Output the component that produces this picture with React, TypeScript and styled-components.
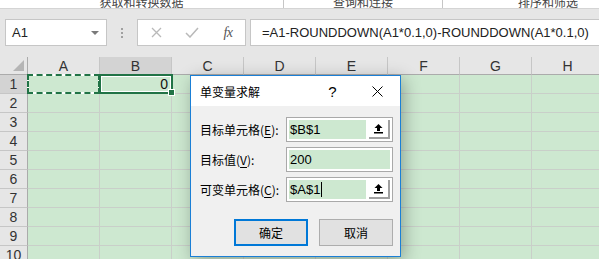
import React from "react";
import styled, { createGlobalStyle } from "styled-components";

const UI = `"Liberation Sans", Arial, "Noto Sans CJK SC", sans-serif`;
const CJK = `"Noto Sans CJK SC", "Liberation Sans", sans-serif`;

const GlobalStyle = createGlobalStyle`
  html, body {
    margin: 0;
    padding: 0;
  }
  body {
    width: 599px;
    height: 259px;
    overflow: hidden;
    font-family: ${UI};
  }
`;

const Screen = styled.div`
  position: relative;
  width: 599px;
  height: 259px;
  overflow: hidden;
  background: #e6e6e6;
  display: flex;
  flex-direction: column;
`;

const Ribbon = styled.div`
  height: 8px;
  flex-shrink: 0;
  display: flex;
  overflow: hidden;
  background: #fff;
  border-bottom: 1px solid #d4d4d4;
`;

const RibbonGroup = styled.div<{ $w: number; $last?: boolean }>`
  width: ${(p) => p.$w}px;
  flex-shrink: 0;
  display: flex;
  justify-content: center;
  align-items: flex-end;
  border-right: ${(p) => (p.$last ? "none" : "1px solid #c6c6c6")};
  font: 12px/12px ${CJK};
  color: #444;
  white-space: nowrap;
`;

const FormulaBar = styled.div`
  height: 48px;
  flex-shrink: 0;
  box-sizing: border-box;
  padding: 10px 0 11px 5px;
  display: flex;
  align-items: stretch;
`;

const NameBox = styled.div`
  width: 102px;
  flex-shrink: 0;
  box-sizing: border-box;
  background: #fff;
  border: 1px solid #c6c6c6;
  display: flex;
  align-items: center;
  justify-content: space-between;
  padding: 0 7px 0 6px;
  font: 13px ${UI};
  color: #222;
`;

const DropArrow = styled.span`
  width: 0;
  height: 0;
  border-left: 4px solid transparent;
  border-right: 4px solid transparent;
  border-top: 4px solid #7a7a7a;
`;

const Grip = styled.div`
  width: 30px;
  flex-shrink: 0;
  display: flex;
  flex-direction: column;
  align-items: center;
  justify-content: center;
  gap: 2px;
`;

const GripDot = styled.span`
  width: 2px;
  height: 2px;
  background: #a0a0a0;
`;

const FuncBox = styled.div`
  width: 109px;
  flex-shrink: 0;
  box-sizing: border-box;
  background: #fff;
  border: 1px solid #c6c6c6;
  display: flex;
`;

const FuncButton = styled.div`
  width: 36px;
  flex-shrink: 0;
  display: flex;
  align-items: center;
  justify-content: center;
`;

const Fx = styled.span`
  font: italic 14px "Liberation Serif", serif;
  color: #555;
  letter-spacing: -0.5px;
`;

const FormulaInput = styled.div`
  margin-left: 4px;
  width: 380px;
  flex-shrink: 0;
  box-sizing: border-box;
  background: #fff;
  border: 1px solid #c6c6c6;
  display: flex;
  align-items: center;
  padding-left: 11px;
  font: 13px ${UI};
  color: #222;
  white-space: nowrap;
`;

const Sheet = styled.div`
  display: grid;
  grid-template-columns: 28px repeat(8, 72px);
  grid-template-rows: 18px repeat(10, 19px);
`;

const Corner = styled.div`
  box-sizing: border-box;
  background: #e6e6e6;
  border-right: 1px solid #ababab;
  border-bottom: 1px solid #ababab;
  display: flex;
  align-items: flex-end;
  justify-content: flex-end;
  padding: 0 3px 3px 0;
`;

const ColHeader = styled.div<{ $selected?: boolean }>`
  box-sizing: border-box;
  background: ${(p) => (p.$selected ? "#d3d3d3" : "#e6e6e6")};
  border-right: 1px solid #c6c6c6;
  border-bottom: 1px solid #ababab;
  display: flex;
  align-items: center;
  justify-content: center;
  font: 14px ${UI};
  color: #333;
`;

const RowHeader = styled.div<{ $selected?: boolean }>`
  box-sizing: border-box;
  background: ${(p) => (p.$selected ? "#d3d3d3" : "#e6e6e6")};
  border-right: 1px solid #ababab;
  border-bottom: 1px solid #c6c6c6;
  display: flex;
  align-items: center;
  justify-content: center;
  font: 14px ${UI};
  color: #333;
`;

const Cell = styled.div`
  position: relative;
  box-sizing: border-box;
  background: #cde8d0;
  border-right: 1px solid #c9cfc9;
  border-bottom: 1px solid #c9cfc9;
  display: flex;
  align-items: center;
  justify-content: flex-end;
  padding-right: 3px;
  font: 14px ${UI};
  color: #111;
`;

const Marquee = styled.div`
  position: absolute;
  left: -1px;
  top: -1px;
  right: -1px;
  bottom: -1px;
  z-index: 2;
  border: 2px dashed #217346;
  background: linear-gradient(#cde8d0, #cde8d0) padding-box,
    linear-gradient(#fff, #fff) border-box;
`;

const ActiveCell = styled.div`
  position: absolute;
  left: -1px;
  top: -1px;
  right: -2px;
  bottom: -1px;
  z-index: 3;
  border: 2px solid #217346;
  box-shadow: inset 0 0 0 1px #fff;
  pointer-events: none;
`;

const FillHandle = styled.span`
  position: absolute;
  right: -4px;
  bottom: -4px;
  width: 5px;
  height: 5px;
  background: #217346;
  border: 1px solid #fff;
`;

const Dialog = styled.div`
  position: absolute;
  left: 190px;
  top: 75px;
  width: 211px;
  height: 182px;
  box-sizing: border-box;
  border: 1px solid #1a7fd6;
  background: #f0f0f0;
  display: flex;
  flex-direction: column;
  box-shadow: 3px 4px 16px rgba(0, 0, 0, 0.3);
  z-index: 10;
`;

const TitleBar = styled.div`
  height: 30px;
  flex-shrink: 0;
  background: #fff;
  display: flex;
  align-items: center;
  padding-left: 9px;
`;

const Title = styled.span`
  flex: 1;
  font: 12px ${CJK};
  color: #000;
`;

const TitleButton = styled.div`
  width: 45px;
  height: 100%;
  display: flex;
  align-items: center;
  justify-content: center;
  font: 15px ${UI};
  color: #000;
`;

const Body = styled.div`
  flex: 1;
  padding: 11px 7px 10px 9px;
  display: flex;
  flex-direction: column;
`;

const Form = styled.div`
  display: grid;
  grid-template-columns: 86px 107px;
  grid-auto-rows: 25px;
  row-gap: 5px;
`;

const Label = styled.div`
  display: flex;
  align-items: center;
  font: 12px ${CJK};
  color: #000;
  white-space: nowrap;
  u {
    text-decoration: underline;
    text-underline-offset: 2px;
  }
`;

const RefBox = styled.div`
  box-sizing: border-box;
  display: flex;
  background: #fff;
  border: 1px solid #a9a9a9;
  padding: 2px;
`;

const RefField = styled.div`
  flex: 1;
  display: flex;
  align-items: center;
  padding-left: 1px;
  background: #cde8d0;
  font: 13px ${UI};
  color: #000;
`;

const Caret = styled.span`
  width: 1px;
  height: 15px;
  margin-left: 1px;
  background: #000;
`;

const RefButton = styled.div`
  width: 21px;
  margin-left: 3px;
  box-sizing: border-box;
  background: #fff;
  border-right: 2px solid #a0a0a0;
  border-bottom: 2px solid #a0a0a0;
  display: flex;
  align-items: center;
  justify-content: center;
`;

const Buttons = styled.div`
  margin-top: auto;
  display: flex;
  justify-content: flex-end;
  gap: 11px;
`;

const DlgButton = styled.div<{ $default?: boolean }>`
  width: 74px;
  height: 27px;
  box-sizing: border-box;
  background: #e1e1e1;
  border: ${(p) => (p.$default ? "2px solid #0078d7" : "1px solid #adadad")};
  display: flex;
  align-items: center;
  justify-content: center;
  font: 12px ${CJK};
  color: #000;
`;

const COLS = ["A", "B", "C", "D", "E", "F", "G", "H"];
const ROWS = [1, 2, 3, 4, 5, 6, 7, 8, 9, 10];

function CollapseIcon() {
  return (
    <svg width="11" height="11" viewBox="0 0 11 11">
      <path d="M5.5 1 L9.5 5 H7 V8 H4 V5 H1.5 Z" fill="#000" />
      <rect x="1" y="9" width="9" height="1.5" fill="#000" />
    </svg>
  );
}

export default function App() {
  return (
    <Screen>
      <GlobalStyle />
      <Ribbon>
        <RibbonGroup $w={283}>获取和转换数据</RibbonGroup>
        <RibbonGroup $w={158}>查询和连接</RibbonGroup>
        <RibbonGroup $w={210} $last>
          排序和筛选
        </RibbonGroup>
      </Ribbon>

      <FormulaBar>
        <NameBox>
          <span>A1</span>
          <DropArrow />
        </NameBox>
        <Grip>
          <GripDot />
          <GripDot />
          <GripDot />
        </Grip>
        <FuncBox>
          <FuncButton>
            <svg width="11" height="11" viewBox="0 0 11 11">
              <path d="M1 1 L10 10 M10 1 L1 10" stroke="#b9b9b9" strokeWidth="1.3" />
            </svg>
          </FuncButton>
          <FuncButton>
            <svg width="14" height="11" viewBox="0 0 14 11">
              <path d="M1 6 L5 10 L13 1" stroke="#b9b9b9" strokeWidth="1.5" fill="none" />
            </svg>
          </FuncButton>
          <FuncButton>
            <Fx>fx</Fx>
          </FuncButton>
        </FuncBox>
        <FormulaInput>=A1-ROUNDDOWN(A1*0.1,0)-ROUNDDOWN(A1*0.1,0)</FormulaInput>
      </FormulaBar>

      <Sheet>
        <Corner>
          <svg width="11" height="11" viewBox="0 0 11 11">
            <path d="M11 0 L11 11 L0 11 Z" fill="#b5b5b5" />
          </svg>
        </Corner>
        {COLS.map((c) => (
          <ColHeader key={c} $selected={c === "B"}>
            {c}
          </ColHeader>
        ))}
        {ROWS.map((r) => (
          <React.Fragment key={r}>
            <RowHeader $selected={r === 1}>{r}</RowHeader>
            {COLS.map((c) => (
              <Cell key={c}>
                {r === 1 && c === "A" && <Marquee />}
                {r === 1 && c === "B" && (
                  <>
                    0
                    <ActiveCell>
                      <FillHandle />
                    </ActiveCell>
                  </>
                )}
              </Cell>
            ))}
          </React.Fragment>
        ))}
      </Sheet>

      <Dialog>
        <TitleBar>
          <Title>单变量求解</Title>
          <TitleButton>?</TitleButton>
          <TitleButton>
            <svg width="11" height="11" viewBox="0 0 11 11">
              <path d="M0.5 0.5 L10.5 10.5 M10.5 0.5 L0.5 10.5" stroke="#000" strokeWidth="1" />
            </svg>
          </TitleButton>
        </TitleBar>
        <Body>
          <Form>
            <Label>
              目标单元格(<u>E</u>):
            </Label>
            <RefBox>
              <RefField>$B$1</RefField>
              <RefButton>
                <CollapseIcon />
              </RefButton>
            </RefBox>
            <Label>
              目标值(<u>V</u>):
            </Label>
            <RefBox>
              <RefField>200</RefField>
            </RefBox>
            <Label>
              可变单元格(<u>C</u>):
            </Label>
            <RefBox>
              <RefField>
                $A$1
                <Caret />
              </RefField>
              <RefButton>
                <CollapseIcon />
              </RefButton>
            </RefBox>
          </Form>
          <Buttons>
            <DlgButton $default>确定</DlgButton>
            <DlgButton>取消</DlgButton>
          </Buttons>
        </Body>
      </Dialog>
    </Screen>
  );
}
